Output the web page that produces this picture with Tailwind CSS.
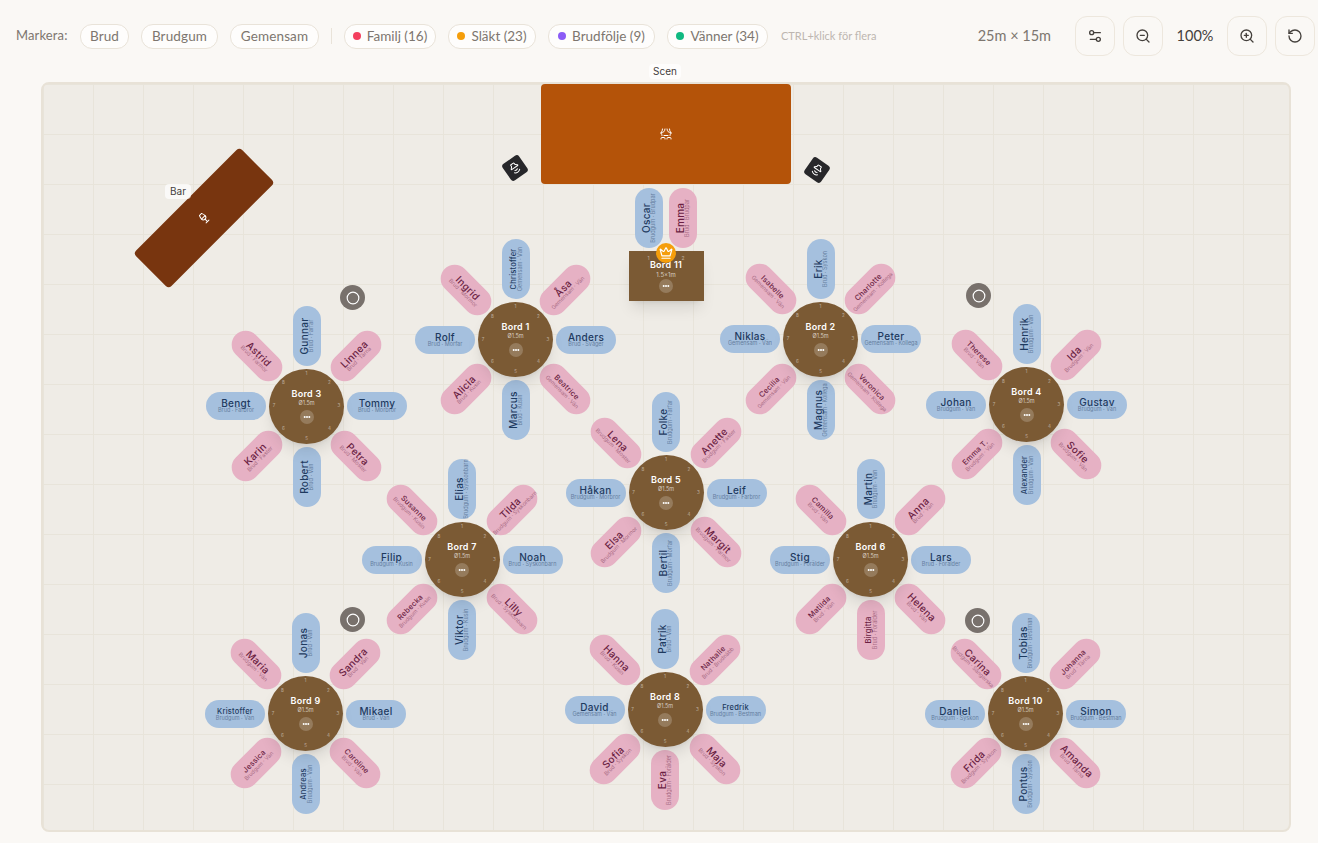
<!DOCTYPE html>
<html lang="sv">
<head>
    <meta charset="UTF-8">
    <title>Bordsplacering</title>
    <script src="https://cdn.jsdelivr.net/npm/@tailwindcss/browser@4"></script>
</head>
<body class="bg-[#faf8f5] w-[1318px] h-[843px] overflow-hidden font-['Inter',sans-serif]">
    <header class="flex items-center h-[72px] pl-4 pr-[3px] font-['Lato',sans-serif] text-[#7d766f]">
        <span class="text-[13px] tracking-[0.01em] mr-3 w-[52px]">Markera:</span>
        <button class="h-[25px] w-[49px] rounded-[12px] border border-[#e9e3d9] bg-[#fefdfc] text-[13.5px] tracking-[0.01em] mr-3">Brud</button>
        <button class="h-[25px] w-[77px] rounded-[12px] border border-[#e9e3d9] bg-[#fefdfc] text-[13.5px] tracking-[0.01em] mr-3">Brudgum</button>
        <button class="h-[25px] w-[89px] rounded-[12px] border border-[#e9e3d9] bg-[#fefdfc] text-[13.5px] tracking-[0.01em]">Gemensam</button>
        <div class="w-px h-4 bg-[#e9e3d9] ml-3 mr-3"></div>
        <button class="h-[25px] w-[92px] rounded-[12px] border border-[#e9e3d9] bg-[#fefdfc] text-[13.5px] mr-3 flex items-center justify-center gap-1.5"><span class="w-2 h-2 rounded-full bg-[#f43f5e]"></span>Familj (16)</button>
        <button class="h-[25px] w-[88px] rounded-[12px] border border-[#e9e3d9] bg-[#fefdfc] text-[13.5px] mr-3 flex items-center justify-center gap-1.5"><span class="w-2 h-2 rounded-full bg-[#f59e0b]"></span>Släkt (23)</button>
        <button class="h-[25px] w-[107px] rounded-[12px] border border-[#e9e3d9] bg-[#fefdfc] text-[13.5px] mr-3 flex items-center justify-center gap-1.5"><span class="w-2 h-2 rounded-full bg-[#8b5cf6]"></span>Brudfölje (9)</button>
        <button class="h-[25px] w-[101px] rounded-[12px] border border-[#e9e3d9] bg-[#fefdfc] text-[13.5px] flex items-center justify-center gap-1.5"><span class="w-2 h-2 rounded-full bg-[#10b981]"></span>Vänner (34)</button>
        <span class="text-[11px] text-[#bdb6b0] ml-[13px]">CTRL+klick för flera</span>
        <span class="ml-auto text-[14.5px] mr-6">25m × 15m</span>
        <button class="w-10 h-10 rounded-xl border border-[#ede7dd] flex items-center justify-center text-[#44403c] mr-2">
            <svg width="16" height="16" viewBox="0 0 24 24" fill="none" stroke="currentColor" stroke-width="2" stroke-linecap="round" stroke-linejoin="round"><path d="M20 7h-9"/><path d="M14 17H5"/><circle cx="17" cy="17" r="3"/><circle cx="7" cy="7" r="3"/></svg>
        </button>
        <button class="w-10 h-10 rounded-xl border border-[#ede7dd] flex items-center justify-center text-[#44403c]">
            <svg width="16" height="16" viewBox="0 0 24 24" fill="none" stroke="currentColor" stroke-width="2" stroke-linecap="round" stroke-linejoin="round"><circle cx="11" cy="11" r="8"/><line x1="21" x2="16.65" y1="21" y2="16.65"/><line x1="8" x2="14" y1="11" y2="11"/></svg>
        </button>
        <span class="w-[64px] text-center text-[14.5px] text-[#44403c]">100%</span>
        <button class="w-10 h-10 rounded-xl border border-[#ede7dd] flex items-center justify-center text-[#44403c] mr-2">
            <svg width="16" height="16" viewBox="0 0 24 24" fill="none" stroke="currentColor" stroke-width="2" stroke-linecap="round" stroke-linejoin="round"><circle cx="11" cy="11" r="8"/><line x1="21" x2="16.65" y1="21" y2="16.65"/><line x1="11" x2="11" y1="8" y2="14"/><line x1="8" x2="14" y1="11" y2="11"/></svg>
        </button>
        <button class="w-10 h-10 rounded-xl border border-[#ede7dd] flex items-center justify-center text-[#44403c]">
            <svg width="16" height="16" viewBox="0 0 24 24" fill="none" stroke="currentColor" stroke-width="2" stroke-linecap="round" stroke-linejoin="round"><path d="M3 12a9 9 0 1 0 9-9 9.75 9.75 0 0 0-6.74 2.74L3 8"/><path d="M3 3v5h5"/></svg>
        </button>
    </header>

    <main class="pl-[41px] pt-[10px]">
        <div id="floor" class="relative w-[1250px] h-[750px] box-border rounded-lg border-2 border-[#e8e2d7] bg-[#efece6] bg-[linear-gradient(to_right,#e8e4da_1px,transparent_1px),linear-gradient(to_bottom,#e8e4da_1px,transparent_1px)] bg-[size:50px_50px]">
            <!-- stage -->
            <div class="absolute left-[498px] top-0 w-[250px] h-[100px] rounded bg-[#b45309] flex items-center justify-center text-white">
                <svg width="12" height="12" viewBox="0 0 24 24" fill="none" stroke="currentColor" stroke-width="2" stroke-linecap="round" stroke-linejoin="round"><path d="M2 10s3-3 3-8"/><path d="M22 10s-3-3-3-8"/><path d="M10 2c0 4.4-3.600 8-8 8"/><path d="M14 2c0 4.4 3.600 8 8 8"/><path d="M2 10s2 2 2 5"/><path d="M22 10s-2 2-2 5"/><path d="M8 15h8"/><path d="M2 22v-1a2 2 0 0 1 2-2h4a2 2 0 0 1 2 2v1"/><path d="M14 22v-1a2 2 0 0 1 2-2h4a2 2 0 0 1 2 2v1"/></svg>
            </div>
            <span class="absolute left-[606px] top-[-20px] w-[32px] h-[15px] rounded bg-white/70 text-[10px] leading-[15px] text-center text-[#44403c]">Scen</span>

            <!-- bar -->
            <div class="absolute left-[86px] top-[109px] w-[150px] h-[50px] rounded bg-[#78350f] -rotate-45 flex items-center justify-center text-white">
                <svg width="12" height="12" viewBox="0 0 24 24" fill="none" stroke="currentColor" stroke-width="2" stroke-linecap="round" stroke-linejoin="round"><path d="M8 22h8"/><path d="M7 10h10"/><path d="M12 15v7"/><path d="M12 15a5 5 0 0 0 5-5c0-2-.5-4-2-8H9c-1.500 4-2 6-2 8a5 5 0 0 0 5 5Z"/></svg>
            </div>
            <span class="absolute left-[122px] top-[100px] w-[26px] h-[15px] rounded bg-white/70 text-[10px] leading-[15px] text-center text-[#44403c]">Bar</span>

            <!-- speakers -->
            <div class="absolute left-[462px] top-[74px] w-5 h-5 rounded-[3px] bg-[#27272a] rotate-[55deg] flex items-center justify-center text-white">
                <svg width="12" height="12" viewBox="0 0 24 24" fill="none" stroke="currentColor" stroke-width="2" stroke-linecap="round" stroke-linejoin="round"><path d="M11 4.702a.705.705 0 0 0-1.203-.498L6.413 7.587A1.400 1.400 0 0 1 5.416 8H3a1 1 0 0 0-1 1v6a1 1 0 0 0 1 1h2.416a1.400 1.400 0 0 1 .997.413l3.383 3.384A.705.705 0 0 0 11 19.298z"/><path d="M16 9a5 5 0 0 1 0 6"/><path d="M19.364 18.364a9 9 0 0 0 0-12.728"/></svg>
            </div>
            <div class="absolute left-[764px] top-[76px] w-5 h-5 rounded-[3px] bg-[#27272a] rotate-[125deg] flex items-center justify-center text-white">
                <svg width="12" height="12" viewBox="0 0 24 24" fill="none" stroke="currentColor" stroke-width="2" stroke-linecap="round" stroke-linejoin="round"><path d="M11 4.702a.705.705 0 0 0-1.203-.498L6.413 7.587A1.400 1.400 0 0 1 5.416 8H3a1 1 0 0 0-1 1v6a1 1 0 0 0 1 1h2.416a1.400 1.400 0 0 1 .997.413l3.383 3.384A.705.705 0 0 0 11 19.298z"/><path d="M16 9a5 5 0 0 1 0 6"/><path d="M19.364 18.364a9 9 0 0 0 0-12.728"/></svg>
            </div>

            <!-- pillars -->
            <div class="absolute left-[297px] top-[201px] w-[25px] h-[25px] rounded-full bg-[#78716c] flex items-center justify-center text-white"><svg width="14" height="14" viewBox="0 0 24 24" fill="none" stroke="currentColor" stroke-width="2"><circle cx="12" cy="12" r="10"/></svg></div>
            <div class="absolute left-[923px] top-[199px] w-[25px] h-[25px] rounded-full bg-[#78716c] flex items-center justify-center text-white"><svg width="14" height="14" viewBox="0 0 24 24" fill="none" stroke="currentColor" stroke-width="2"><circle cx="12" cy="12" r="10"/></svg></div>
            <div class="absolute left-[297px] top-[523px] w-[25px] h-[25px] rounded-full bg-[#78716c] flex items-center justify-center text-white"><svg width="14" height="14" viewBox="0 0 24 24" fill="none" stroke="currentColor" stroke-width="2"><circle cx="12" cy="12" r="10"/></svg></div>
            <div class="absolute left-[922px] top-[524px] w-[25px] h-[25px] rounded-full bg-[#78716c] flex items-center justify-center text-white"><svg width="14" height="14" viewBox="0 0 24 24" fill="none" stroke="currentColor" stroke-width="2"><circle cx="12" cy="12" r="10"/></svg></div>

            <!-- rectangular head table -->
            <div class="absolute left-[585.5px] top-[167px] w-[75px] h-[50px] bg-[#7b5a34] shadow-lg text-white">
                <span class="absolute left-[19px] top-[4px] text-[5px] leading-[6px] text-white/50">1</span>
                <span class="absolute left-[53px] top-[4px] text-[5px] leading-[6px] text-white/50">2</span>
                <p class="mt-[8px] text-center text-[9px] leading-[12px] font-semibold tracking-[0.03em]">Bord 11</p>
                <p class="text-center text-[6px] leading-[7px] text-white/70">1.5×1m</p>
                <div class="mx-auto mt-[1px] w-[14px] h-[14px] rounded-full bg-white/20 flex items-center justify-center"><svg width="8" height="8" viewBox="0 0 24 24" fill="white"><circle cx="5" cy="12" r="3"/><circle cx="12" cy="12" r="3"/><circle cx="19" cy="12" r="3"/></svg></div>
            </div>
            <div class="absolute left-[612.5px] top-[158.5px] w-5 h-5 rounded-full bg-[#f59e0b] flex items-center justify-center text-white z-10">
                <svg width="14" height="14" viewBox="0 0 24 24" fill="none" stroke="currentColor" stroke-width="2" stroke-linecap="round" stroke-linejoin="round"><path d="M11.562 3.266a.5.5 0 0 1 .876 0L15.390 8.870a1 1 0 0 0 1.516.294L21.183 5.500a.5.5 0 0 1 .798.519l-2.834 10.246a1 1 0 0 1-.956.734H5.810a1 1 0 0 1-.957-.734L2.020 6.020a.5.5 0 0 1 .798-.519l4.276 3.664a1 1 0 0 0 1.516-.294z"/><path d="M5 21h14"/></svg>
            </div>
        </div>
    </main>

    <script>
        // seat lists run clockwise from the top; "s" = smaller name, "p" = pink on a straight seat
        const tables = [
            { n: 1, x: 515.5, y: 339.5, seats: [["Christoffer", "Gemensam · Vän", "s"], ["Åsa", "Gemensam · Vän"], ["Anders", "Brud · Svåger"], ["Beatrice", "Gemensam · Vän", "s"], ["Marcus", "Brud · Kusin"], ["Alicia", "Brud · Kusin"], ["Rolf", "Brud · Morfar"], ["Ingrid", "Brud · Mormor"]] },
            { n: 2, x: 820.5, y: 339, seats: [["Erik", "Brud · Syskon"], ["Charlotte", "Gemensam · Kollega", "s"], ["Peter", "Gemensam · Kollega"], ["Veronica", "Gemensam · Kollega", "s"], ["Magnus", "Gemensam · Kollega"], ["Cecilia", "Gemensam · Vän", "s"], ["Niklas", "Gemensam · Vän"], ["Isabelle", "Gemensam · Vän", "s"]] },
            { n: 3, x: 306.5, y: 406, seats: [["Gunnar", "Brud · Farfar"], ["Linnea", "Brud · Tärna"], ["Tommy", "Brud · Morbror"], ["Petra", "Brud · Moster"], ["Robert", "Brud · Vän"], ["Karin", "Brud · Faster"], ["Bengt", "Brud · Farbror"], ["Astrid", "Brud · Farmor"]] },
            { n: 4, x: 1026.5, y: 404.5, seats: [["Henrik", "Brudgum · Vän"], ["Ida", "Brudgum · Vän"], ["Gustav", "Brudgum · Vän"], ["Sofie", "Brudgum · Vän"], ["Alexander", "Brudgum · Vän", "s"], ["Emma T.", "Brudgum · Vän", "s"], ["Johan", "Brudgum · Vän"], ["Therese", "Brud · Vän", "s"]] },
            { n: 5, x: 666, y: 492.5, seats: [["Folke", "Brudgum · Farfar"], ["Anette", "Brudgum · Faster"], ["Leif", "Brudgum · Farbror"], ["Margit", "Brudgum · Farmor"], ["Bertil", "Brudgum · Morfar"], ["Elsa", "Brudgum · Mormor"], ["Håkan", "Brudgum · Morbror"], ["Lena", "Brudgum · Moster"]] },
            { n: 6, x: 870.5, y: 559.5, seats: [["Martin", "Brudgum · Vän"], ["Anna", "Brud · Vän"], ["Lars", "Brud · Förälder"], ["Helena", "Brud · Vän"], ["Birgitta", "Brud · Förälder", "sp"], ["Matilda", "Brud · Vän", "s"], ["Stig", "Brudgum · Förälder"], ["Camilla", "Brud · Vän", "s"]] },
            { n: 7, x: 462, y: 559.5, seats: [["Elias", "Brudgum · Syskonbarn"], ["Tilda", "Brudgum · Syskonbarn"], ["Noah", "Brud · Syskonbarn"], ["Lilly", "Brud · Syskonbarn"], ["Viktor", "Brudgum · Kusin"], ["Rebecka", "Brudgum · Kusin", "s"], ["Filip", "Brudgum · Kusin"], ["Susanne", "Brudgum · Kusin", "s"]] },
            { n: 8, x: 665, y: 709.5, seats: [["Patrik", "Brud · Vän"], ["Nathalie", "Brud · Brudnäbb", "s"], ["Fredrik", "Brudgum · Bestman", "s"], ["Maja", "Brud · Syskon"], ["Eva", "Brudgum · Förälder", "p"], ["Sofia", "Brud · Syskon"], ["David", "Gemensam · Vän"], ["Hanna", "Brud · Kusin"]] },
            { n: 9, x: 305.5, y: 713.5, seats: [["Jonas", "Brud · Vän"], ["Sandra", "Brud · Vän"], ["Mikael", "Brud · Vän"], ["Caroline", "Brud · Vän", "s"], ["Andreas", "Brudgum · Vän", "s"], ["Jessica", "Brudgum · Vän", "s"], ["Kristoffer", "Brudgum · Vän", "s"], ["Maria", "Brudgum · Vän"]] },
            { n: 10, x: 1025.5, y: 713.5, seats: [["Tobias", "Brudgum · Bestman"], ["Johanna", "Brud · Tärna", "s"], ["Simon", "Brudgum · Bestman"], ["Amanda", "Brud · Tärna"], ["Pontus", "Brudgum · Syskon"], ["Frida", "Brudgum · Syskon"], ["Daniel", "Brudgum · Syskon"], ["Carina", "Brudgum · Sångerska"]] }
        ];

        const floor = document.getElementById("floor");
        const originX = 43, originY = 84;
        const seatRadius = 70.5, numberRadius = 32.5;

        function seatHtml(name, sub, flags, cx, cy, rot, pink) {
            const small = flags.includes("s");
            const skin = pink ? "bg-[#e6b1c4] text-[#6b1f43]" : "bg-[#a5c0de] text-[#1e3a5f]";
            const nameCls = small ? "text-[7.5px] leading-[7px] font-medium tracking-[0.03em]" : "text-[10px] leading-[7px] font-medium tracking-[0.03em]";
            return `<div class="absolute w-[60px] h-[28px] pt-px rounded-full flex flex-col items-center justify-center whitespace-nowrap ${skin}" style="left:${cx - originX - 30}px;top:${cy - originY - 14}px;transform:rotate(${rot}deg)">
                <span class="${nameCls}">${name}</span>
                <span class="text-[5.5px] leading-[6px] opacity-50">${sub}</span>
            </div>`;
        }

        let html = "";
        tables.forEach(t => {
            t.seats.forEach((s, i) => {
                const a = (-90 + 45 * i) * Math.PI / 180;
                const rots = [-90, -45, 0, 45, -90, -45, 0, 45];
                const flags = s[2] || "";
                const pink = i % 2 === 1 || flags.includes("p");
                html += seatHtml(s[0], s[1], flags, t.x + seatRadius * Math.cos(a), t.y + seatRadius * Math.sin(a), rots[i], pink);
            });
            let nums = "";
            for (let i = 0; i < 8; i++) {
                const a = (-90 + 45 * i) * Math.PI / 180;
                nums += `<span class="absolute w-[6px] h-[6px] text-[4.5px] leading-[6px] text-center text-white/50" style="left:${34.5 + numberRadius * Math.cos(a)}px;top:${34.5 + numberRadius * Math.sin(a)}px">${i + 1}</span>`;
            }
            html += `<div class="absolute w-[75px] h-[75px] rounded-full bg-[#7b5a34] shadow-lg text-white" style="left:${t.x - originX - 37.5}px;top:${t.y - originY - 37.5}px">
                ${nums}
                <p class="mt-[19px] text-center text-[9px] leading-[12px] font-semibold tracking-[0.03em]">Bord ${t.n}</p>
                <p class="text-center text-[5.5px] leading-[7px] text-white/70">Ø1.5m</p>
                <div class="mx-auto mt-[3px] w-[14px] h-[14px] rounded-full bg-white/20 flex items-center justify-center"><svg width="8" height="8" viewBox="0 0 24 24" fill="white"><circle cx="5" cy="12" r="3"/><circle cx="12" cy="12" r="3"/><circle cx="19" cy="12" r="3"/></svg></div>
            </div>`;
        });
        // bride and groom seats above the head table
        html += seatHtml("Oscar", "Brudgum · Brudpar", "", 649, 217.5, -90, false);
        html += seatHtml("Emma", "Brud · Brudpar", "", 683, 217.5, -90, true);
        floor.insertAdjacentHTML("beforeend", html);
    </script>
</body>
</html>
